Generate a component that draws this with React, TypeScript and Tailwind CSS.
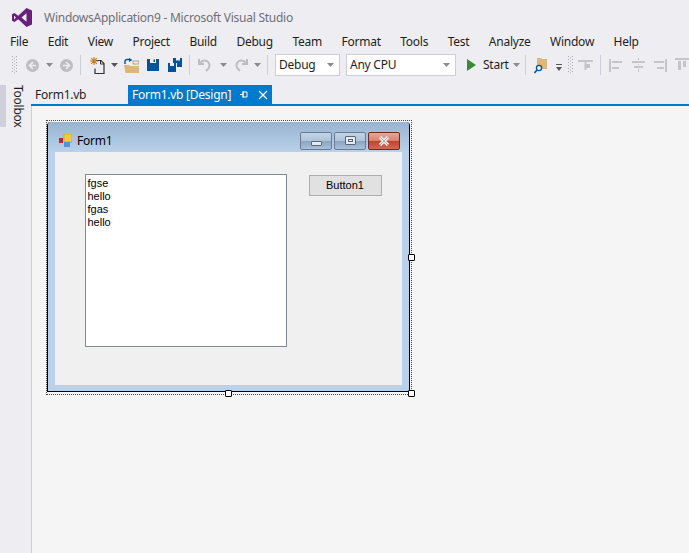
import type { ReactNode } from 'react';

const menus = ['File', 'Edit', 'View', 'Project', 'Build', 'Debug', 'Team', 'Format', 'Tools', 'Test', 'Analyze', 'Window', 'Help'];

function Caret({ className = 'ml-[8px]', color = '#8a8a8f' }: { className?: string; color?: string }) {
  return (
    <svg width="7" height="4" viewBox="0 0 7 4" className={className}>
      <path d="M0 0h7L3.5 4z" fill={color} />
    </svg>
  );
}

function Sep({ className = '' }: { className?: string }) {
  return <div className={`h-[20px] w-px bg-[#ccced8] ${className}`} />;
}

function Grip({ className = '' }: { className?: string }) {
  return (
    <svg width="5" height="18" viewBox="0 0 5 18" className={className}>
      {[0, 3, 6, 9, 12, 15].map(y => (
        <g key={y} fill="#a9a9b2">
          <rect x="0" y={y} width="1" height="1" />
          <rect x="4" y={y} width="1" height="1" />
          <rect x="2" y={y + 1.5} width="1" height="1" />
        </g>
      ))}
    </svg>
  );
}

function Arrow({ dir, className = '' }: { dir: 'l' | 'r'; className?: string }) {
  return (
    <svg width="13" height="13" viewBox="0 0 13 13" className={className}>
      <circle cx="6.5" cy="6.5" r="6.5" fill="#bdbdc2" />
      <path
        d={dir === 'l' ? 'M7 3L3.5 6.5 7 10M3.5 6.5H10' : 'M6 3l3.5 3.5L6 10M9.5 6.5H3'}
        stroke="#eeeef2"
        strokeWidth="1.6"
        fill="none"
      />
    </svg>
  );
}

function NewIcon({ className = '' }: { className?: string }) {
  return (
    <svg width="15" height="17" viewBox="0 0 15 17" className={className}>
      <path d="M6 3.500h5l3 3v10H5v-5" stroke="#333" strokeWidth="1.200" fill="none" />
      <path d="M10.500 4v3h3.500" stroke="#333" strokeWidth="1" fill="none" />
      <path d="M4 0v8M0 4h8M1.200 1.200l5.600 5.600M6.800 1.200l-5.600 5.600" stroke="#c27d1a" strokeWidth="1.100" />
    </svg>
  );
}

function OpenIcon({ className = '' }: { className?: string }) {
  return (
    <svg width="15" height="15" viewBox="0 0 15 15" className={className}>
      <path d="M9 3h6v3H9z" fill="#eeeef2" stroke="#9a8a6a" strokeWidth="0.800" />
      <path d="M0 7h5l1 1h9v7H1.500z" fill="#dcb67a" />
      <path d="M1 6V3.500A2 2 0 0 1 3 1.500h3" stroke="#00539c" strokeWidth="1.400" fill="none" />
      <path d="M5 0l3.500 2L5 4z" fill="#00539c" />
    </svg>
  );
}

function SaveIcon({ className = '' }: { className?: string }) {
  return (
    <svg width="12" height="12" viewBox="0 0 12 12" className={className}>
      <path d="M0 0h12v12H0z" fill="#00539c" />
      <path d="M3 0h6v4H3z" fill="#eeeef2" />
      <path d="M6.500 0.500h1.500v2.500H6.500z" fill="#00539c" />
    </svg>
  );
}

function SaveAllIcon({ className = '' }: { className?: string }) {
  return (
    <svg width="14" height="14" viewBox="0 0 14 14" className={className}>
      <path d="M5 0h9v9H9V5H5z" fill="#00539c" />
      <path d="M8 0h4v2.500H8z" fill="#eeeef2" />
      <path d="M0 5h8v9H0z" fill="#00539c" />
      <path d="M2 5h4v3H2z" fill="#eeeef2" />
    </svg>
  );
}

function UndoIcon({ flip = false, className = '' }: { flip?: boolean; className?: string }) {
  return (
    <svg width="14" height="14" viewBox="0 0 14 14" className={`${flip ? '-scale-x-100' : ''} ${className}`}>
      <path d="M1 1v5h5M1.500 5.500C4 2.500 7 2 9.500 3.500c3 2 3 6 -1.500 9.500" stroke="#bdbdc2" strokeWidth="2" fill="none" />
    </svg>
  );
}

function FindIcon({ className = '' }: { className?: string }) {
  return (
    <svg width="15" height="17" viewBox="0 0 15 17" className={className}>
      <path d="M3 3V1h4l1 1h5v10H3z" fill="#dcb67a" />
      <circle cx="5" cy="11" r="2.600" fill="#eeeef2" stroke="#00539c" strokeWidth="1.300" />
      <path d="M3 13l-2.500 3" stroke="#00539c" strokeWidth="1.600" />
    </svg>
  );
}

// grey alignment glyphs at the right of the toolbar
function AlignIcon({ d, className = '' }: { d: string; className?: string }) {
  return (
    <svg width="15" height="15" viewBox="0 0 15 15" className={className}>
      <path d={d} fill="#c4c4c9" />
    </svg>
  );
}

function Combo({ label, className }: { label: string; className: string }) {
  return (
    <div className={`flex h-[22px] items-center justify-between border border-[#cccedb] bg-white pl-[3px] pr-[5px] ${className}`}>
      <span>{label}</span>
      <Caret className="" />
    </div>
  );
}

function CaptionButton({ className, children }: { className: string; children: ReactNode }) {
  return (
    <div className={`flex h-[18px] w-[32px] items-center justify-center rounded-[2px] border ${className}`}>
      {children}
    </div>
  );
}

function Handle({ className }: { className: string }) {
  return <div className={`absolute h-[7px] w-[7px] rounded-[1px] border border-black bg-white ${className}`} />;
}

export default function App() {
  return (
    <div className="flex h-[553px] w-[689px] flex-col overflow-hidden bg-[#eeeef2] font-['Noto_Sans',sans-serif] text-[12px] tracking-[-0.25px] text-[#1e1e1e]">
      {/* Title bar */}
      <div className="flex h-[31px] items-center pl-[12px] pt-[4px]">
        <svg width="20" height="19" viewBox="0 0 20 19">
          <path
            fillRule="evenodd"
            d="M14.500 0L20 2.500v14L14.500 19 6.200 11.300 2.500 14 0 12.700V6.300L2.500 5l3.700 2.700zM2 7.800v3.400L4 9.500zM14.500 5.300L9.500 9.500l5 4.200z"
            fill="#68217a"
          />
        </svg>
        <span className="ml-[12px] mt-[1px] text-[#6f6f78]">WindowsApplication9 - Microsoft Visual Studio</span>
      </div>

      {/* Menu */}
      <div className="flex h-[20px] items-center gap-[19.5px] pl-[10px] pt-[2px]">
        {menus.map(m => (
          <span key={m}>{m}</span>
        ))}
      </div>

      {/* Toolbar */}
      <div className="flex h-[28px] items-center pl-[12px] [&>*]:shrink-0">
        <Grip />
        <Arrow dir="l" className="ml-[9px]" />
        <Caret className="ml-[7px]" />
        <Arrow dir="r" className="ml-[7px]" />
        <Sep className="ml-[7px]" />
        <NewIcon className="ml-[9px]" />
        <Caret className="ml-[6px]" color="#555" />
        <OpenIcon className="ml-[6px]" />
        <SaveIcon className="ml-[8px]" />
        <SaveAllIcon className="ml-[9px]" />
        <Sep className="ml-[7px]" />
        <UndoIcon className="ml-[8px]" />
        <Caret className="ml-[8px]" />
        <UndoIcon flip className="ml-[7px]" />
        <Caret className="ml-[6px]" />
        <Sep className="ml-[6px]" />
        <Combo label="Debug" className="ml-[7px] w-[65px]" />
        <Combo label="Any CPU" className="ml-[6px] w-[110px]" />
        <svg width="9" height="12" viewBox="0 0 9 12" className="ml-[11px]">
          <path d="M0 0l9 6-9 6z" fill="#388a34" />
        </svg>
        <span className="ml-[7px] w-[24px]">Start</span>
        <Caret className="ml-[6px]" />
        <Sep className="ml-[5px]" />
        <FindIcon className="ml-[8px]" />
        <svg width="6" height="9" viewBox="0 0 6 9" className="ml-[7px] mt-[7px]">
          <path d="M0 0h6v1H0zM0 3h6L3 7z" fill="#55555a" />
        </svg>
        <Grip className="ml-[6px]" />
        <AlignIcon className="ml-[5px]" d="M0 2h15v2H8.500v8h-2V4H0zM8.500 6h3.500v4H8.500z" />
        <Sep className="ml-[7px]" />
        <AlignIcon className="ml-[8px]" d="M0 1h2v13H0zM3 3h10v2H3zM3 9h7v2H3z" />
        <AlignIcon className="ml-[7px]" d="M1 3h13v2H1zM7 0h1v2H7zM3 8h9v2H3zM7 6h1v1H7zM7 11h1v3H7z" />
        <AlignIcon className="ml-[6px]" d="M13 1h2v13h-2zM2 3h10v2H2zM5 9h7v2H5z" />
        <AlignIcon className="ml-[8px]" d="M0 0h15v2H0zM3 3h3v9H3zM8 3h3v6H8z" />
      </div>

      {/* Body */}
      <div className="flex min-h-0 flex-1 pt-[6px]">
        <div className="flex w-[31px] shrink-0 items-start">
          <div className="h-[42px] w-[6px] bg-[#cfd0db]" />
          <span className="ml-[3px] text-[#1e1e1e] [writing-mode:vertical-rl]">Toolbox</span>
        </div>

        <div className="flex min-w-0 flex-1 flex-col">
          {/* Tabs */}
          <div className="flex h-[19px] items-center">
            <span className="w-[97px] pl-[4px]">Form1.vb</span>
            <div className="flex h-full w-[144px] items-center whitespace-nowrap bg-[#007acc] pl-[4px] text-white">
              <span className="w-[97px]">Form1.vb [Design]</span>
              <svg width="9" height="9" viewBox="0 0 9 9" className="ml-[11px]">
                <path d="M0 4.500h3M3 2h4v5H3zM3 1v7" stroke="#fff" strokeWidth="1" fill="none" />
              </svg>
              <svg width="10" height="10" viewBox="0 0 10 10" className="ml-[9px]">
                <path d="M1 1l8 8M9 1l-8 8" stroke="#fff" strokeWidth="1.300" />
              </svg>
            </div>
          </div>
          <div className="h-[2px] bg-[#007acc]" />

          {/* Designer surface */}
          <div className="min-h-0 flex-1 border-l border-[#cccedb] bg-[#f5f5f5] pl-[14px] pt-[14px]">
            <div className="relative h-[275px] w-[366px] border border-dotted border-[#444]">
              <div className="mt-[1px] flex h-[270px] w-[363px] flex-col rounded-t-[4px] border-x border-b border-black bg-[#b9d1ea]">
                {/* Form caption */}
                <div className="flex h-[30px] shrink-0 items-center rounded-t-[4px] bg-gradient-to-b from-[#99b4d1] to-[#b9d1ea] pl-[11px] pr-[9px] pt-[7px]">
                  <svg width="13" height="13" viewBox="0 0 13 13">
                    <rect x="0" y="4" width="4" height="5" fill="#a8322a" />
                    <rect x="5" y="0" width="8" height="8" fill="#f4c93c" stroke="#b58b1c" strokeWidth="0.500" />
                    <rect x="5" y="8" width="6" height="5" fill="#5b8fd8" />
                  </svg>
                  <span className="ml-[5px] text-[12px] text-black">Form1</span>
                  <div className="ml-auto flex gap-[2px]">
                    <CaptionButton className="border-[#6a7b94] bg-[linear-gradient(#c3d4e6_0%,#aec3d9_50%,#8aa4c0_50%,#a9c0d8_100%)]">
                      <div className="mt-[5px] h-[5px] w-[11px] rounded-[1px] border border-[#5b6678] bg-[#e6ebf1]" />
                    </CaptionButton>
                    <CaptionButton className="border-[#6a7b94] bg-[linear-gradient(#c3d4e6_0%,#aec3d9_50%,#8aa4c0_50%,#a9c0d8_100%)]">
                      <div className="flex h-[9px] w-[11px] items-center justify-center rounded-[1px] border border-[#5b6678] bg-[#e6ebf1]">
                        <div className="h-[3px] w-[5px] border border-[#5b6678]" />
                      </div>
                    </CaptionButton>
                    <CaptionButton className="border-[#6b2a24] bg-[linear-gradient(#e9a899_0%,#d9806c_50%,#bd4329_50%,#cf6c55_100%)]">
                      <svg width="12" height="10" viewBox="0 0 12 10">
                        <path d="M2 1l8 8M10 1L2 9" stroke="#eee" strokeWidth="3.200" />
                        <path d="M2 1l8 8M10 1L2 9" stroke="#999" strokeWidth="0.800" />
                      </svg>
                    </CaptionButton>
                  </div>
                </div>

                {/* Form client area */}
                <div className="mx-[7px] flex h-[233px] items-start bg-[#f0f0f0] pl-[30px] pt-[22px] font-['Liberation_Sans',sans-serif] text-[11px] leading-[13px] tracking-normal text-black">
                  <div className="h-[173px] w-[202px] border border-[#82879a] bg-white pl-[1.5px] pt-[2px]">
                    <div>fgse</div>
                    <div>hello</div>
                    <div>fgas</div>
                    <div>hello</div>
                  </div>
                  <div className="ml-[22px] mt-[1px] flex h-[21px] w-[73px] items-center justify-center border border-[#adadad] bg-[#e1e1e1] pr-[1px]">
                    Button1
                  </div>
                </div>
              </div>
              <Handle className="left-[361px] top-[133px]" />
              <Handle className="left-[178px] top-[269px]" />
              <Handle className="left-[361px] top-[269px]" />
            </div>
          </div>
        </div>
      </div>
    </div>
  );
}
